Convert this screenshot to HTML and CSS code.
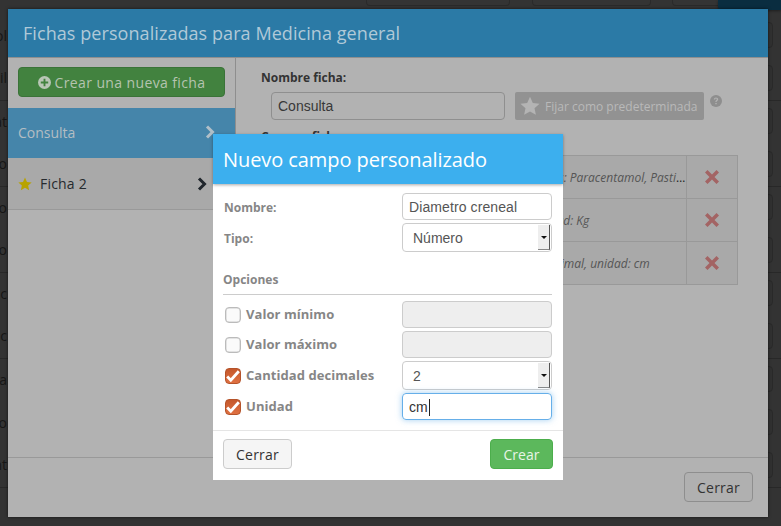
FILE: index.html
```html
<!DOCTYPE html>
<html lang="es">
<head>
<meta charset="utf-8">
<title>Fichas personalizadas</title>
<link rel="stylesheet" href="styles.css">
</head>
<body>
<svg class="defs" width="0" height="0" aria-hidden="true">
  <defs>
    <path id="star" d="M10 .8l2.8 6.2 6.7.7-5 4.5 1.4 6.6L10 15.4l-5.9 3.4 1.4-6.6-5-4.5 6.7-.7z"/>
    <path id="cross" d="M2.5 0L7 4.5 11.5 0 14 2.5 9.500 7 14 11.500 11.500 14 7 9.500 2.500 14 0 11.500 4.500 7 0 2.500z"/>
    <path id="tick" d="M2.200 7.500l3.600 3.700 8-9" fill="none" stroke="#fff" stroke-width="2.800"/>
  </defs>
</svg>

<div class="backdrop">
  <div class="topbar">
    <span class="top-btn top-a"></span>
    <span class="top-btn top-b"></span>
    <span class="top-btn top-c"></span>
    <span class="top-nav"></span>
  </div>
  <div class="bg-row"><span class="bg-cell">ol</span><span class="bg-btn"></span></div>
  <div class="bg-row line"><span class="bg-cell">il</span><span class="bg-btn"></span></div>
  <div class="bg-row"><span class="bg-cell">at</span><span class="bg-btn"></span></div>
  <div class="bg-row line"><span class="bg-cell">do</span><span class="bg-btn"></span></div>
  <div class="bg-row"><span class="bg-cell">lo</span><span class="bg-btn"></span></div>
  <div class="bg-row line"><span class="bg-cell">to</span><span class="bg-btn"></span></div>
  <div class="bg-row"><span class="bg-cell">tic</span><span class="bg-btn"></span></div>
  <div class="bg-row line"><span class="bg-cell">olc</span><span class="bg-btn"></span></div>
  <div class="bg-row"><span class="bg-cell">a</span><span class="bg-btn"></span></div>
  <div class="bg-row"><span class="bg-cell">to</span><span class="bg-btn"></span></div>
  <div class="bg-row line"><span class="bg-cell">nt</span><span class="bg-btn"></span></div>
</div>

<section class="outer">
  <header class="outer-head">Fichas personalizadas para Medicina general</header>
  <div class="outer-main">
    <aside class="sidebar">
      <div class="new-wrap">
        <button class="new-btn" type="button">
          <svg class="plus" viewBox="0 0 14 14" width="13" height="13"><circle cx="7" cy="7" r="7" fill="#b9c6b6"/><path d="M6 3h2v3h3v2H8v3H6V8H3V6h3z" fill="#42823f"/></svg>
          Crear una nueva ficha
        </button>
      </div>
      <div class="item active">
        <span>Consulta</span>
        <svg class="chev" viewBox="0 0 10 14" width="10" height="14"><path d="M2 1.500L7.500 7 2 12.500" fill="none" stroke="#b0bfc8" stroke-width="3"/></svg>
      </div>
      <div class="item second">
        <svg class="fav" viewBox="0 0 20 20" width="14" height="14"><use href="#star" fill="#b8a300"/></svg>
        <span>Ficha 2</span>
        <svg class="chev dark" viewBox="0 0 10 14" width="10" height="14"><path d="M2 1.500L7.500 7 2 12.500" fill="none" stroke="#20262c" stroke-width="3"/></svg>
      </div>
    </aside>
    <div class="content">
      <div class="label">Nombre ficha:</div>
      <div class="name-row">
        <div class="name-field">Consulta</div>
        <div class="fix-btn">
          <svg viewBox="0 0 20 20" width="20" height="20"><use href="#star" fill="#b4b4b4"/></svg>
          Fijar como predeterminada
        </div>
        <svg class="help" viewBox="0 0 12 12" width="12" height="12"><circle cx="6" cy="6" r="6" fill="#8e8e8e"/><path d="M3.800 4.600C3.900 3.200 4.800 2.500 6 2.500c1.300 0 2.200.8 2.200 1.800 0 1.500-1.600 1.500-1.600 2.800H5.300c0-1.900 1.500-1.900 1.500-2.800 0-.4-.3-.7-.8-.7s-.8.300-.9 1zM5.300 7.900h1.400v1.400H5.300z" fill="#b2b2b2"/></svg>
      </div>
      <div class="label fields-label">Campos ficha:</div>
      <table class="fields">
        <tr>
          <td class="desc first"><span>Tipo Lista de opciones: Paracentamol, Pastillas</span></td>
          <td class="del"><svg viewBox="0 0 14 14" width="14" height="14"><use href="#cross" fill="#a36464"/></svg></td>
        </tr>
        <tr>
          <td class="desc"><span>Tipo: Numérico, unidad: Kg</span></td>
          <td class="del"><svg viewBox="0 0 14 14" width="14" height="14"><use href="#cross" fill="#a36464"/></svg></td>
        </tr>
        <tr>
          <td class="desc"><span>Tipo: Numérico, 2 decimal, unidad: cm</span></td>
          <td class="del"><svg viewBox="0 0 14 14" width="14" height="14"><use href="#cross" fill="#a36464"/></svg></td>
        </tr>
      </table>
    </div>
  </div>
  <footer class="outer-foot"><button class="close-dim" type="button">Cerrar</button></footer>
</section>

<section class="dialog">
  <header class="dialog-head">Nuevo campo personalizado</header>
  <div class="dialog-body">
    <div class="row">
      <span class="row-label">Nombre:</span>
      <div class="field">Diametro creneal</div>
    </div>
    <div class="row">
      <span class="row-label">Tipo:</span>
      <div class="select"><span>Número</span><i class="arrow"></i></div>
    </div>
    <div class="section-title">Opciones</div>
    <div class="row">
      <span class="check"></span><span class="row-label opt">Valor mínimo</span>
      <div class="field off"></div>
    </div>
    <div class="row">
      <span class="check"></span><span class="row-label opt">Valor máximo</span>
      <div class="field off"></div>
    </div>
    <div class="row">
      <span class="check on"><svg viewBox="0 0 16 14" width="16" height="14"><use href="#tick"/></svg></span><span class="row-label opt">Cantidad decimales</span>
      <div class="select"><span>2</span><i class="arrow"></i></div>
    </div>
    <div class="row">
      <span class="check on"><svg viewBox="0 0 16 14" width="16" height="14"><use href="#tick"/></svg></span><span class="row-label opt">Unidad</span>
      <div class="field focus">cm<i class="caret"></i></div>
    </div>
  </div>
  <footer class="dialog-foot">
    <button class="btn-light" type="button">Cerrar</button>
    <button class="btn-green" type="button">Crear</button>
  </footer>
</section>
</body>
</html>
```

FILE: styles.css
```css
* { box-sizing: border-box; }
html, body { margin: 0; padding: 0; }
body {
  position: relative;
  width: 781px;
  height: 526px;
  overflow: hidden;
  background: #333;
  font-family: "Open Sans", "Liberation Sans", sans-serif;
}
.defs { position: absolute; }

/* dimmed page behind the dialogs */
.backdrop { position: absolute; inset: 0; color: #161616; font-size: 14px; }
.topbar { display: flex; height: 15px; padding-left: 366px; align-items: flex-start; }
.top-btn { height: 6px; border: 1px solid #2a2a2a; border-top: 0; border-radius: 0 0 4px 4px; background: #343434; }
.top-a { width: 144px; }
.top-b { width: 119px; margin-left: 22px; }
.top-c { width: 60px; margin-left: 21px; }
.top-nav { width: 63px; height: 10px; margin-left: -14px; background: #0a2d40; border-radius: 0 0 0 4px; box-shadow: 0 1px 3px rgba(0,0,0,.4); }
.bg-row { display: flex; height: 43px; align-items: center; justify-content: space-between; padding-bottom: 3px; }
.bg-row.line { border-bottom: 1px solid #282828; }
.bg-cell { display: flex; justify-content: flex-end; width: 7px; white-space: nowrap; }
.bg-btn { width: 30px; height: 26px; margin-right: 8px; border: 1px solid #292929; border-radius: 4px; background: #313131; }

/* outer modal */
.outer {
  position: relative;
  display: flex;
  flex-direction: column;
  width: 760px;
  height: 508px;
  margin: 9px 0 0 8px;
  background: #b2b2b2;
  box-shadow: 0 0 3px rgba(0,0,0,.6);
}
.outer-head {
  height: 49px;
  padding: 0 15px;
  background: #2b7aa6;
  border-bottom: 1px solid #8f8f8f;
  color: #b0c9d8;
  font-size: 18px;
  letter-spacing: .07px;
  line-height: 48px;
}
.outer-main { flex: 1; display: flex; align-items: flex-start; }
.sidebar { width: 228px; flex: none; border-right: 1px solid #8e8e8e; }
.new-wrap { padding: 9px 10px 11px; }
.new-btn {
  display: flex;
  align-items: center;
  justify-content: center;
  gap: 4px;
  width: 207px;
  height: 30px;
  padding: 0;
  background: #42823f;
  border: 1px solid #3a7338;
  border-radius: 4px;
  color: #b5c4b0;
  font: 14px "Open Sans", sans-serif;
  letter-spacing: .38px;
}
.item { display: flex; align-items: center; height: 50px; padding: 0 20px 0 10px; font-size: 14px; }
.item.active { background: #4585aa; color: #b3bdc3; justify-content: space-between; padding-bottom: 2px; }
.item.second { height: 52px; background: #a9a9a9; border-bottom: 1px solid #999; color: #262a2e; padding-right: 28px; letter-spacing: .2px; }
.fav { margin-right: 8px; }
.item.second .chev { margin-left: auto; }

.content { flex: 1; padding: 12px 30px 0 25px; }
.label { font-size: 12px; font-weight: 700; line-height: 16px; color: #333; }
.name-row { display: flex; align-items: flex-start; margin: 6px 0 0 10px; }
.name-field {
  width: 234px;
  height: 28px;
  padding-left: 6px;
  border: 1px solid #8f8f8f;
  border-radius: 4px;
  font: 14px/26px "Liberation Sans", sans-serif;
  color: #383838;
}
.fix-btn {
  display: flex;
  align-items: center;
  gap: 5px;
  width: 189px;
  height: 28px;
  margin-left: 10px;
  padding-left: 5px;
  background: #929292;
  border-radius: 2px;
  color: #b9b9b9;
  font-size: 12px;
  white-space: nowrap;
}
.help { margin: 3px 0 0 6px; }
.fields-label { margin-top: 9px; }
.fields {
  width: 477px;
  margin-top: 10px;
  border-collapse: collapse;
  table-layout: fixed;
  color: #222;
}
.fields td { height: 43px; padding: 0; background: #a9a9a9; border: 1px solid #999; }
.fields td.desc {
  padding-left: 184px;
  font-size: 12px;
  overflow: hidden;
  white-space: nowrap;
  text-overflow: ellipsis;
  border-right: 1px dashed #8d8d8d;
}
.fields td.desc.first { padding-left: 185px; }
.desc span { font-style: italic; color: #555; }
.del { width: 51px; text-align: center; }
.del svg { display: block; margin: 0 auto; }
.outer-foot {
  display: flex;
  justify-content: flex-end;
  height: 60px;
  padding: 14px 15px 0;
  border-top: 1px solid #999;
}
.close-dim {
  width: 69px;
  height: 30px;
  padding: 0;
  background: #b0b0b0;
  border: 1px solid #8e8e8e;
  border-radius: 4px;
  color: #333;
  font: 14px "Open Sans", sans-serif;
  letter-spacing: .2px;
}

/* inner dialog */
.dialog {
  position: absolute;
  left: 213px;
  top: 134px;
  width: 350px;
  height: 346px;
  background: #fff;
}
.dialog-head {
  height: 50px;
  padding: 0 10px;
  background: #3cafee;
  box-shadow: 0 1px 3px rgba(0,0,0,.35);
  color: #fff;
  font-size: 20px;
  letter-spacing: -.08px;
  line-height: 52px;
}
.dialog-body { padding: 9px 11px 10px 10px; }
.row { display: flex; align-items: center; margin-bottom: 3px; }
.row:last-child { margin-bottom: 0; }
.row-label { padding: 2px 0 0 1px; font-size: 12px; font-weight: 700; color: #868686; }
.row-label.opt { padding: 0 0 2px 5px; font-size: 13px; letter-spacing: .05px; }
.field, .select {
  width: 150px;
  margin-left: auto;
  border-radius: 4px;
  font: 14px "Liberation Sans", sans-serif;
  color: #555;
}
.field {
  height: 27px;
  padding-left: 6px;
  border: 1px solid #ccc;
  line-height: 26px;
  letter-spacing: .1px;
}
.field.off { background: #eee; }
.field.focus {
  border-color: #66afe9;
  box-shadow: 0 0 6px rgba(102,175,233,.6);
  color: #333;
}
.caret { display: inline-block; width: 1px; height: 17px; margin-left: 1px; vertical-align: -4px; background: #222; }
.select {
  display: flex;
  align-items: center;
  justify-content: space-between;
  height: 29px;
  padding: 1px 1px 1px 10px;
  border: 1px solid #ccc;
}
.arrow {
  display: flex;
  align-items: center;
  justify-content: center;
  width: 12px;
  height: 100%;
  background: #eee;
  border-right: 1px solid #555;
  border-bottom: 1px solid #888;
}
.arrow::after { content: ""; border: 3px solid transparent; border-top-color: #111; border-bottom: 0; }
.section-title {
  height: 40px;
  margin-bottom: 6px;
  padding: 16px 0 0;
  border-bottom: 1px solid #ccc;
  font-size: 12px;
  font-weight: 700;
  color: #868686;
}
.check {
  flex: none;
  display: flex;
  align-items: center;
  justify-content: center;
  width: 16px;
  height: 16px;
  margin-left: 2px;
  border: 1px solid #bbb;
  box-shadow: inset 0 0 0 .5px #ccc;
  border-radius: 4px;
  background: #fafafa;
}
.check svg { flex: none; }
.check.on { background: linear-gradient(#c4582c, #e07142); border-color: #b5532a; box-shadow: none; }
.dialog-foot {
  display: flex;
  justify-content: space-between;
  padding: 8px 10px 0;
  border-top: 1px solid #e5e5e5;
}
.btn-light, .btn-green {
  height: 30px;
  padding: 0;
  border-radius: 4px;
  font: 14px "Open Sans", sans-serif;
}
.btn-light { width: 69px; background: #f5f5f5; border: 1px solid #ccc; color: #333; letter-spacing: .2px; }
.btn-green { width: 63px; background: #5cb85c; border: 1px solid #4cae4c; color: #e8f4e8; }
```
